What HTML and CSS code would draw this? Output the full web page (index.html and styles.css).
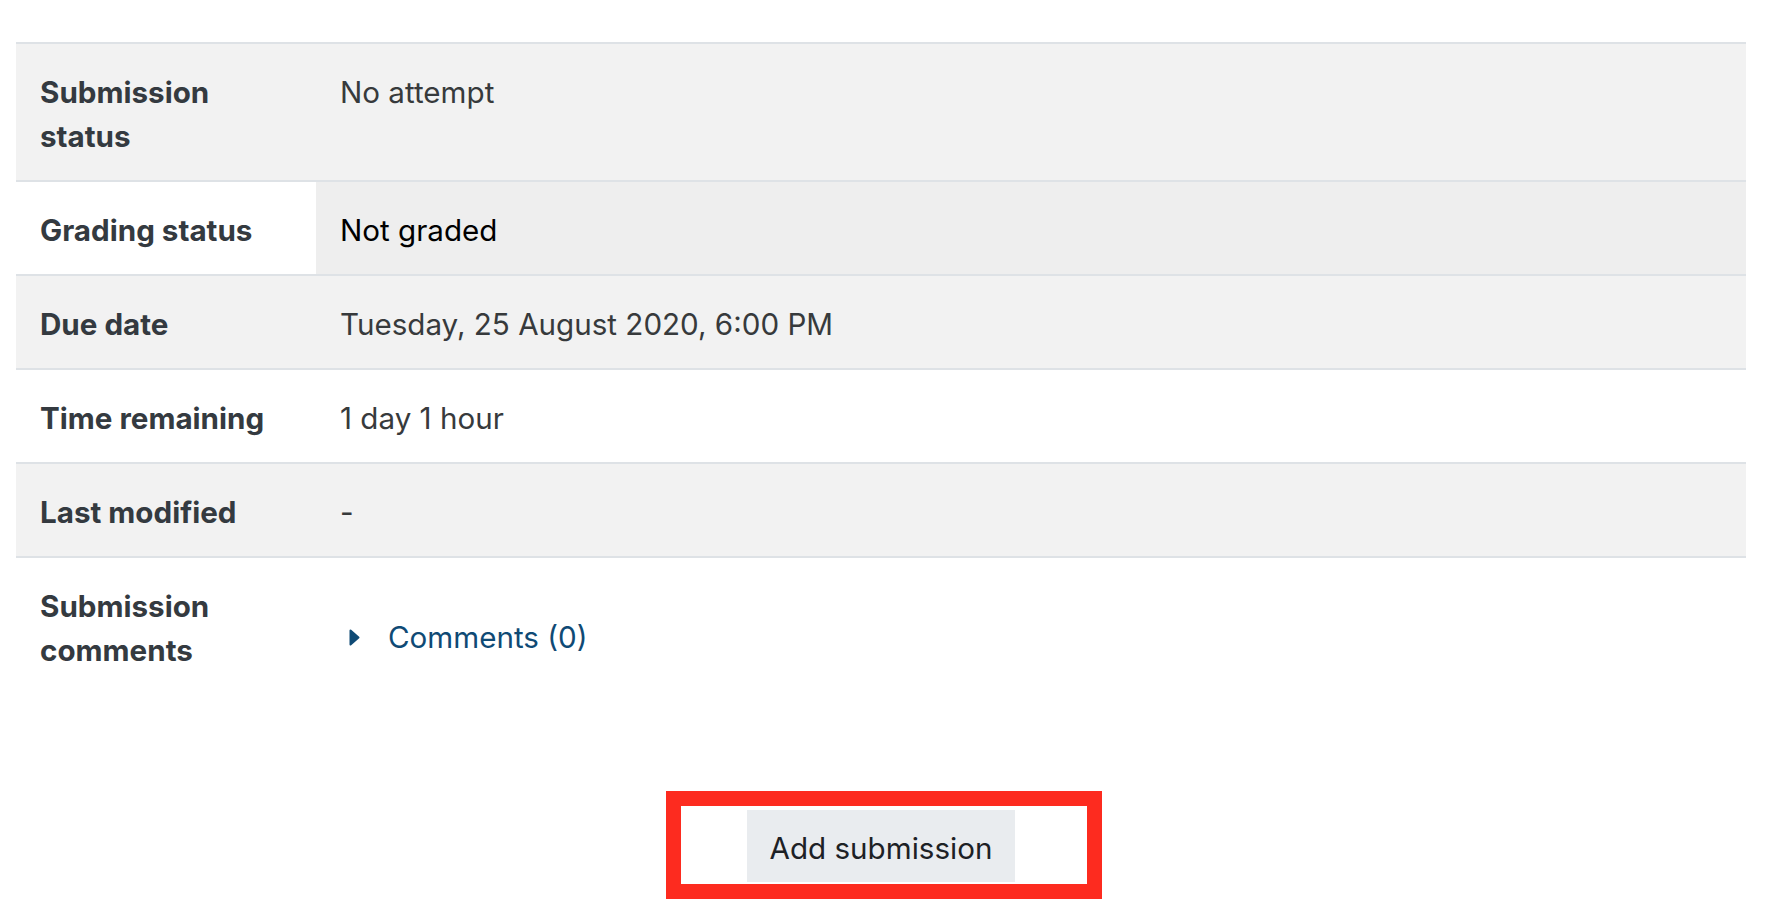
FILE: index.html
```html
<!DOCTYPE html>
<html lang="en">
<head>
<meta charset="utf-8">
<title>Submission status</title>
<link rel="stylesheet" href="styles.css">
</head>
<body>
<div class="page">
  <div class="status-table">
    <div class="row striped">
      <div class="cell label">Submission status</div>
      <div class="cell value">No attempt</div>
    </div>
    <div class="row">
      <div class="cell label">Grading status</div>
      <div class="cell value notgraded">Not graded</div>
    </div>
    <div class="row striped">
      <div class="cell label">Due date</div>
      <div class="cell value">Tuesday, 25 August 2020, 6:00 PM</div>
    </div>
    <div class="row">
      <div class="cell label">Time remaining</div>
      <div class="cell value">1 day 1 hour</div>
    </div>
    <div class="row striped">
      <div class="cell label">Last modified</div>
      <div class="cell value">-</div>
    </div>
    <div class="row">
      <div class="cell label">Submission comments</div>
      <div class="cell value">
        <a class="comment-link" href="#">
          <svg class="caret" width="11" height="17" viewBox="0 0 11 17" aria-hidden="true"><path d="M1.5 1.5 L9.5 8.5 L1.5 15.5 Z" fill="#0f4a75" stroke="#0f4a75" stroke-width="2" stroke-linejoin="round"/></svg>
          <span>Comments (0)</span>
        </a>
      </div>
    </div>
  </div>
  <div class="actions">
    <div class="highlight">
      <button class="btn" type="button">Add submission</button>
    </div>
  </div>
</div>
</body>
</html>
```
FILE: styles.css
```css
html, body {
  margin: 0;
  padding: 0;
  background: #ffffff;
}

body {
  font-family: Inter, "Noto Sans", "Liberation Sans", sans-serif;
  font-size: 29.6px;
  line-height: 44px;
  color: #373a3c;
}

.page {
  margin: 42px 28px 0 16px;
}

.status-table {
  display: flex;
  flex-direction: column;
}

.row {
  display: grid;
  grid-template-columns: 300px 1fr;
  border-top: 2px solid #dee2e6;
}

.row.striped {
  background: #f2f2f2;
}

.cell {
  padding: 26px 24px 22px;
}

.label {
  font-weight: 700;
  color: #343a40;
}

.value.notgraded {
  background: #eeeeee;
  color: #000000;
}

.comment-link {
  display: inline-flex;
  align-items: center;
  margin-top: 31px;
  margin-left: 9px;
  color: #0f4a75;
  text-decoration: none;
}

.caret {
  display: block;
  margin-right: 28px;
}

.actions {
  display: flex;
  justify-content: center;
  padding-top: 97px;
}

.highlight {
  margin-left: 6px;
  border: 15px solid #fd2b1f;
  padding: 4px 72px 2px 66px;
}

.btn {
  display: block;
  font-family: inherit;
  font-size: 29.6px;
  line-height: 44px;
  color: #1d2125;
  background: #e9ecef;
  border: 2px solid #e9ecef;
  border-radius: 0;
  padding: 14px 0 10px;
  width: 268px;
  margin: 0;
  white-space: nowrap;
  text-align: center;
}
```
